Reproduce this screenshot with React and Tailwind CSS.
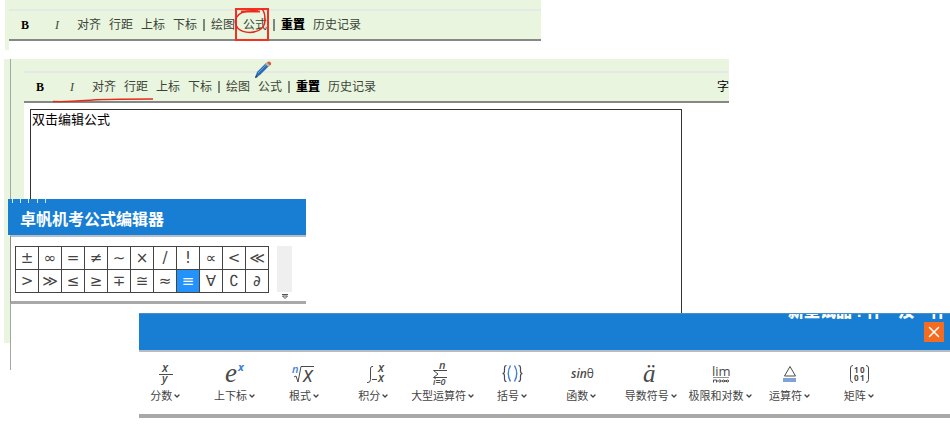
import { ChevronDown, X } from 'lucide-react';

const symbolRows = [
  ['±', '∞', '=', '≠', '∼', '×', '/', '!', '∝', '<', '≪'],
  ['>', '≫', '≤', '≥', '∓', '≅', '≈', '≡', '∀', '∁', '∂'],
];

const structures = [
  { label: '分数', icon: FractionIcon },
  { label: '上下标', icon: ScriptIcon },
  { label: '根式', icon: RadicalIcon },
  { label: '积分', icon: IntegralIcon },
  { label: '大型运算符', icon: SumIcon },
  { label: '括号', icon: BracketIcon },
  { label: '函数', icon: FunctionIcon },
  { label: '导数符号', icon: AccentIcon },
  { label: '极限和对数', icon: LimitIcon },
  { label: '运算符', icon: OperatorIcon },
  { label: '矩阵', icon: MatrixIcon },
];

const INK = '#4a4a4a';
const BLUE = '#3f7fd6';

function Glyph({ children }) {
  return (
    <svg
      width="48"
      height="24"
      viewBox="0 0 48 24"
      fill="none"
      stroke="none"
      className="overflow-visible font-['Open_Sans','Noto_Sans',sans-serif]"
      aria-hidden="true"
    >
      {children}
    </svg>
  );
}

function FractionIcon() {
  return (
    <Glyph>
      <text x="20" y="10" fontSize="12" fontStyle="italic" fontWeight="600" fill={INK}>x</text>
      <path d="M17 12.5H31" stroke={INK} />
      <text x="20" y="20" fontSize="11" fontStyle="italic" fontWeight="600" fill={INK}>y</text>
    </Glyph>
  );
}

function ScriptIcon() {
  return (
    <Glyph>
      <text x="14" y="20" fontSize="27" fontStyle="italic" fill={INK} fontFamily="Liberation Serif, serif">e</text>
      <text x="27" y="9" fontSize="11" fontStyle="italic" fontWeight="700" fill={BLUE}>x</text>
    </Glyph>
  );
}

function RadicalIcon() {
  return (
    <Glyph>
      <text x="12" y="11" fontSize="11" fontStyle="italic" fontWeight="600" fill={BLUE}>n</text>
      <path d="M14 15L16 14L18 20L21 4.5H34" stroke={INK} />
      <text x="23" y="20" fontSize="21" fontStyle="italic" fill={INK}>x</text>
    </Glyph>
  );
}

function IntegralIcon() {
  return (
    <Glyph>
      <path d="M23 4.5H22Q20.5 4.5 20.5 7V17.5Q20.5 20.5 18 20.5H17" stroke={INK} />
      <path d="M22 17.5H27" stroke={INK} />
      <text x="28" y="10" fontSize="12" fontStyle="italic" fontWeight="600" fill={INK}>x</text>
      <text x="28" y="20" fontSize="12" fontStyle="italic" fontWeight="600" fill={INK}>x</text>
    </Glyph>
  );
}

function SumIcon() {
  return (
    <Glyph>
      <text x="20" y="7" fontSize="11" fontStyle="italic" fontWeight="600" fill={INK}>n</text>
      <path d="M28 8.5H14.5L19 12L14.5 15.5H28" stroke={INK} />
      <text x="14" y="23" fontSize="9" fontStyle="italic" fontWeight="600" fill={INK}>i=0</text>
    </Glyph>
  );
}

function BracketIcon() {
  return (
    <Glyph>
      <path d="M18.5 3.5Q16.5 3.5 16.5 6V9Q16.5 11.5 14.5 11.5Q16.5 11.5 16.5 14V17Q16.5 19.5 18.5 19.5" stroke={INK} strokeWidth="1.2" />
      <path d="M22.5 3.5Q18 11.5 22.5 19.5M26.5 3.5Q31 11.5 26.5 19.5" stroke={BLUE} strokeWidth="1.4" />
      <path d="M30.5 3.5Q32.5 3.5 32.5 6V9Q32.5 11.5 34.5 11.5Q32.5 11.5 32.5 14V17Q32.5 19.5 30.5 19.5" stroke={INK} strokeWidth="1.2" />
    </Glyph>
  );
}

function FunctionIcon() {
  return (
    <Glyph>
      <text x="13" y="16" fontSize="12" fill={INK}>
        <tspan fontStyle="italic" fontWeight="600">sin</tspan>θ
      </text>
    </Glyph>
  );
}

function AccentIcon() {
  return (
    <Glyph>
      <text x="16" y="20" fontSize="25" fontStyle="italic" fill={INK} fontFamily="Liberation Serif, serif">ä</text>
    </Glyph>
  );
}

function LimitIcon() {
  return (
    <Glyph>
      <text x="15" y="14" fontSize="13" fill={INK}>lim</text>
      <path d="M16 15.5H32" stroke={INK} strokeWidth="0.6" />
      <path
        d="M16.5 20.5V18H19.5V20.5M20 19H24M22.5 17.5L24.5 19L22.5 20.5M25 19Q26.5 17 28.5 19T32 19Q30.5 17 28.5 19T25 19"
        stroke={INK}
      />
    </Glyph>
  );
}

function OperatorIcon() {
  return (
    <Glyph>
      <path d="M24 4.5L29.5 14H18.5Z" stroke={INK} />
      <path d="M17 16H30V20H17Z" fill="#7fa3d8" />
    </Glyph>
  );
}

function MatrixIcon() {
  return (
    <Glyph>
      <path d="M18 3.5Q15.5 3.5 15.5 6V17.5Q15.5 20.5 18 20.5M31 3.5Q33.5 3.5 33.5 6V17.5Q33.5 20.5 31 20.5" stroke={INK} />
      <text x="19" y="11" fontSize="8" fontWeight="700" fill={INK}>1</text>
      <text x="25" y="11" fontSize="8" fontWeight="700" fill={INK}>0</text>
      <text x="19" y="19" fontSize="8" fontWeight="700" fill={INK}>0</text>
      <text x="25" y="19" fontSize="8" fontWeight="700" fill={INK}>1</text>
    </Glyph>
  );
}

function ToolButton({ children, bold = false }) {
  return (
    <button type="button" className={bold ? 'px-1 font-black text-black' : 'px-1'}>
      {children}
    </button>
  );
}

function Separator() {
  return <span className="mx-0.5 h-3 w-0.5 bg-[#7d8678]" />;
}

function Toolbar({ trailing }) {
  return (
    <div
      role="toolbar"
      aria-label="编辑工具"
      className="flex h-8 items-center whitespace-nowrap border-t-2 border-b-2 border-t-[#e6e8e6] border-b-[#868886] pl-2 text-xs text-[#3c443a]"
    >
      <button type="button" aria-label="加粗" className="w-4 font-['Liberation_Serif',serif] font-bold text-black">
        B
      </button>
      <button type="button" aria-label="斜体" className="mr-2 ml-4 w-4 font-['Liberation_Serif',serif] italic">
        I
      </button>
      <ToolButton>对齐</ToolButton>
      <ToolButton>行距</ToolButton>
      <ToolButton>上标</ToolButton>
      <ToolButton>下标</ToolButton>
      <Separator />
      <ToolButton>绘图</ToolButton>
      <ToolButton>公式</ToolButton>
      <Separator />
      <ToolButton bold>重置</ToolButton>
      <ToolButton>历史记录</ToolButton>
      {trailing && <span className="ml-auto text-black">{trailing}</span>}
    </div>
  );
}

function FormulaHighlight() {
  return (
    <svg className="absolute top-[7px] left-[229px]" width="36" height="35" viewBox="0 0 36 35" fill="none" aria-hidden="true">
      <rect x="2" y="2" width="32" height="31" stroke="#f5301f" strokeWidth="2" />
      <path d="M7 4.5H26" stroke="#f5301f" strokeWidth="2" />
      <path
        d="M24 4C14 3 5 5 2 11C-1 20 6 25 16 25.5C26 25 31 20 31 13C31 8 30 4 28 2"
        stroke="#e8281a"
        strokeWidth="1.5"
      />
    </svg>
  );
}

function Pencil() {
  return (
    <svg className="absolute top-[2px] left-[230px]" width="18" height="18" viewBox="0 0 18 18" aria-hidden="true">
      <path d="M1 17L3 11L12 2L15 5L6 14Z" fill="#2b6db3" />
      <path d="M4 12L13 3" stroke="#6aa5da" />
      <path d="M1 17L2 14L4 16Z" fill="#223c5c" />
      <path d="M11 3L13 1L16.5 4L14.5 6Z" fill="#b9b4b4" />
      <path d="M13 1.5Q15 -0.5 16.5 1.2T16 4.5Z" fill="#d3593b" />
    </svg>
  );
}

function SymbolWindow() {
  return (
    <section className="absolute top-[199px] left-2 w-[298px]" aria-label="卓帆机考公式编辑器">
      <header className="relative flex h-9 items-center bg-[#177ed4] pt-1.5 pl-3">
        <svg className="absolute top-0 left-[3px]" width="36" height="4" viewBox="0 0 36 4" aria-hidden="true">
          <path d="M1.5 0V4M9.5 0V4M17.5 0V4M26.5 0V4M34.5 0V4" stroke="#d6e9f8" />
        </svg>
        <h2 className="text-base leading-5 font-bold text-white">卓帆机考公式编辑器</h2>
      </header>
      <div className="ml-0.5 flex gap-2 border-t-2 border-b-[3px] border-l border-t-[#b5bcc4] border-b-[#a8a8a8] border-l-[#8c8c8c] bg-white pt-[9px] pl-1">
        <table className="mb-2 border-collapse font-['DejaVu_Sans','Noto_Sans',sans-serif] text-[15px] text-[#444]">
          <tbody>
            {symbolRows.map((row) => (
              <tr key={row[0]}>
                {row.map((symbol) => (
                  <td key={symbol} className="border border-[#444] p-0">
                    <button
                      type="button"
                      className={
                        symbol === '≡'
                          ? 'block h-[22px] w-[22px] bg-[#2492fb] leading-5 text-white'
                          : 'block h-[22px] w-[22px] leading-5'
                      }
                    >
                      {symbol}
                    </button>
                  </td>
                ))}
              </tr>
            ))}
          </tbody>
        </table>
        <div className="flex flex-col items-center">
          <div className="h-[46px] w-[15px] bg-[#efefef]" />
          <button type="button" aria-label="更多符号" className="mt-0.5">
            <svg width="6" height="5" viewBox="0 0 6 5" fill="none" stroke="#555" aria-hidden="true">
              <path d="M0 0.5H6M0.5 2H5.5L3 4.5Z" />
            </svg>
          </button>
        </div>
      </div>
      <div className="ml-[3px] h-2.5 bg-white" />
    </section>
  );
}

function StructureWindow() {
  return (
    <section className="absolute top-[313px] right-0 left-[139px] bg-white" aria-label="公式结构">
      <header className="relative flex h-[37px] items-center justify-end border-t border-[#4a8fc9] bg-[#177ed4] pr-1.5">
        <div
          className="absolute top-0 right-0 flex h-[5px] w-[162px] items-end overflow-hidden text-base leading-[14px] font-black whitespace-nowrap text-white"
          aria-hidden="true"
        >
          <span>新型试品 : 什・汝・什</span>
        </div>
        <button type="button" aria-label="关闭" className="flex size-5 items-center justify-center bg-[#f36c21] text-white">
          <X size={18} strokeWidth={2} />
        </button>
      </header>
      <div className="border-t-2 border-b-4 border-t-[#b5bcc4] border-b-[#a8a8a8] pt-2.5 pb-2">
        <div className="mr-14 -ml-2 grid grid-cols-11">
          {structures.map(({ label, icon: Icon }) => (
            <button key={label} type="button" className="flex flex-col items-center text-[11px] leading-5 text-[#444]">
              <Icon />
              <span className="flex items-center gap-px whitespace-nowrap">
                {label}
                <ChevronDown size={8} strokeWidth={4} />
              </span>
            </button>
          ))}
        </div>
      </div>
    </section>
  );
}

export default function App() {
  return (
    <main className="relative bg-white pb-14 font-['Liberation_Sans','Noto_Sans_CJK_SC',sans-serif]">
      <section className="relative mr-[409px] ml-[5px] flex">
        <div className="w-1 bg-[#e9f5de]" />
        <div className="flex-1 pb-[9px]">
          <div className="bg-[#e9f5de] pt-[9px]">
            <Toolbar />
          </div>
        </div>
        <FormulaHighlight />
      </section>

      <section className="relative mt-[9px] mr-[221px] ml-1 flex items-start">
        <div className="h-[284px] w-1.5 bg-[#e9f5de]" />
        <div className="h-[311px] w-px bg-[#a3a8a3]" />
        <div className="h-[141px] w-[13px] bg-[#e9f5de]" />
        <div className="flex-1">
          <div className="relative bg-[#e9f5de] pt-3">
            <Toolbar trailing="字" />
            <Pencil />
          </div>
          <div className="mt-1.5 mr-[47px] ml-1.5 h-[204px] border border-b-0 border-[#333] px-px text-[13px] leading-5 text-black">
            双击编辑公式
          </div>
        </div>
        <svg className="absolute top-[39px] left-[48px]" width="102" height="5" viewBox="0 0 102 5" fill="none" aria-hidden="true">
          <path d="M1 3.5Q15 4 33 2.5T101 1" stroke="#e52a1d" strokeWidth="1.5" />
        </svg>
      </section>

      <SymbolWindow />
      <StructureWindow />
    </main>
  );
}
